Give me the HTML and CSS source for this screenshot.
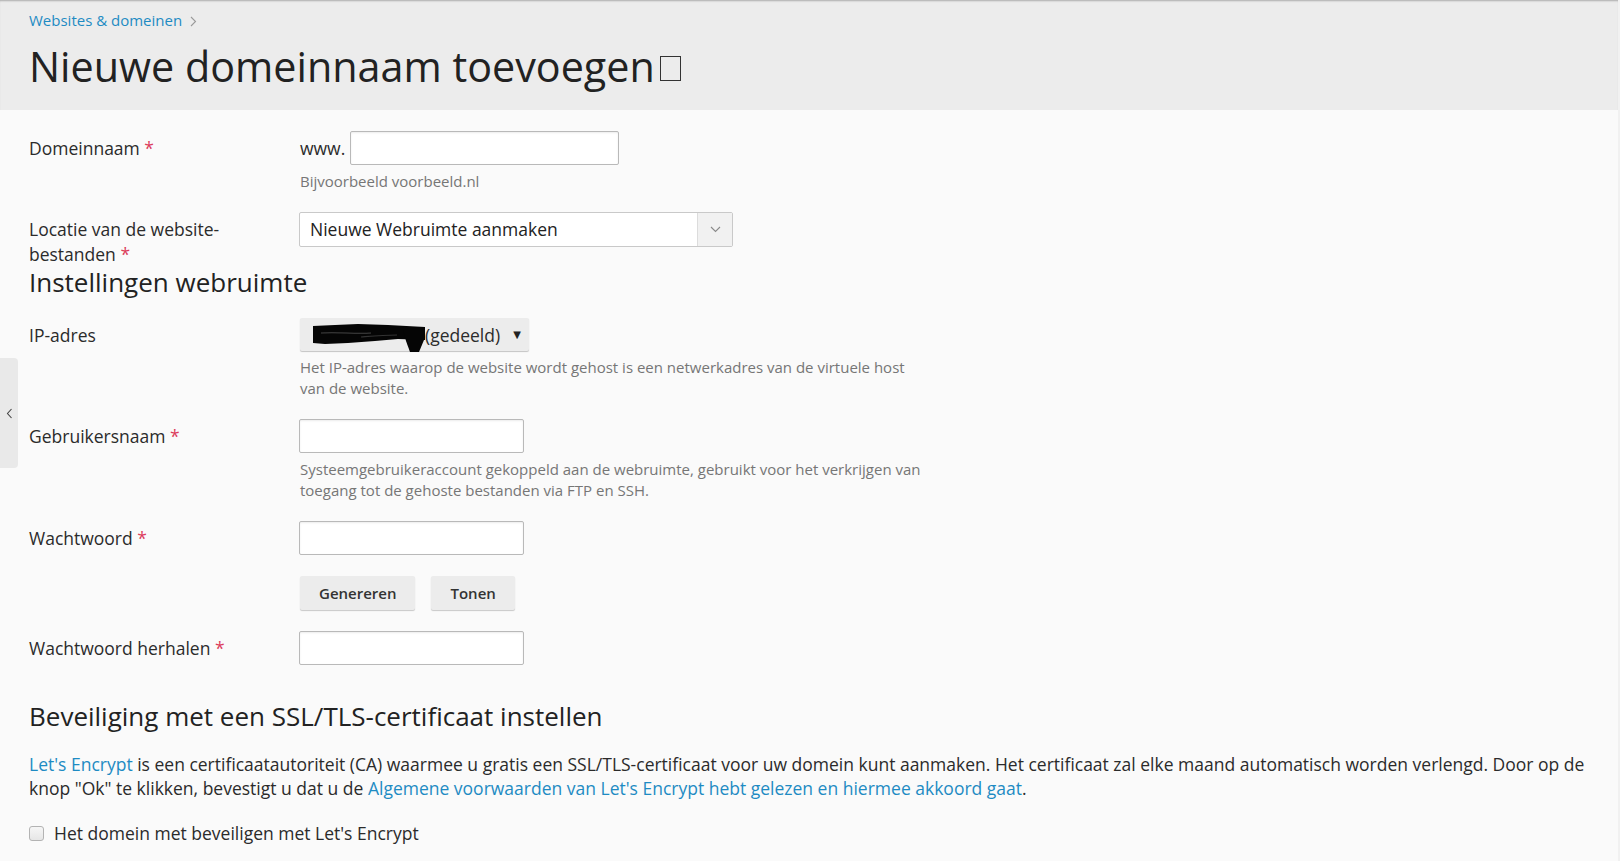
FILE: index.html
```html
<!DOCTYPE html>
<html lang="nl">
<head>
<meta charset="utf-8">
<title>Nieuwe domeinnaam toevoegen</title>
<link rel="stylesheet" href="styles.css">
</head>
<body>
<div class="app">
  <header class="page-header">
    <nav class="breadcrumbs">
      <a class="link" href="#">Websites &amp; domeinen</a>
      <svg class="crumb-sep" width="7" height="11" viewBox="0 0 7 11"><polyline points="1,1 5.5,5.5 1,10" fill="none" stroke="#9a9a9a" stroke-width="1.1"/></svg>
    </nav>
    <h1 class="page-title">Nieuwe domeinnaam toevoegen<span class="tofu"></span></h1>
  </header>

  <main class="content">
    <div class="form-row first">
      <label class="form-label">Domeinnaam <span class="req">*</span></label>
      <div class="form-field">
        <div class="prefixed"><span class="prefix">www.</span><input class="input input-domain" type="text"></div>
        <div class="hint">Bijvoorbeeld voorbeeld.nl</div>
      </div>
    </div>

    <div class="form-row">
      <label class="form-label">Locatie van de website-<br>bestanden <span class="req">*</span></label>
      <div class="form-field">
        <div class="combo">
          <span class="combo-value">Nieuwe Webruimte aanmaken</span>
          <span class="combo-arrow"><svg width="11" height="7" viewBox="0 0 11 7"><polyline points="1,1 5.5,5.5 10,1" fill="none" stroke="#8a8a8a" stroke-width="1.1"/></svg></span>
        </div>
      </div>
    </div>

    <h2 class="section-title">Instellingen webruimte</h2>

    <div class="form-row">
      <label class="form-label">IP-adres</label>
      <div class="form-field">
        <div class="ip-select">
          <svg class="redact" width="113" height="28" viewBox="0 0 113 28">
            <path d="M0 2 L 22 1 L 45 0 L 75 1 L 112 3 L 112 16 L 85 15 L 62 17 L 35 19 L 12 20 L 0 19 Z" fill="#050505"/>
            <path d="M90 6 L 112 6 L 111 16 L 106 28 L 97 28 L 93 17 Z" fill="#050505"/>
            <path d="M8 9 C 25 8, 42 10, 58 9" stroke="#444" stroke-width="1.2" fill="none"/>
            <path d="M48 13 C 60 12, 70 11, 84 11" stroke="#333" stroke-width="1.2" fill="none"/>
          </svg><span class="ip-text">(gedeeld)</span>
          <span class="ip-arrow">▼</span>
        </div>
        <div class="hint hint-block">Het IP-adres waarop de website wordt gehost is een netwerkadres van de virtuele host<br>van de website.</div>
      </div>
    </div>

    <div class="form-row">
      <label class="form-label">Gebruikersnaam <span class="req">*</span></label>
      <div class="form-field">
        <input class="input input-short" type="text">
        <div class="hint hint-block">Systeemgebruikeraccount gekoppeld aan de webruimte, gebruikt voor het verkrijgen van<br>toegang tot de gehoste bestanden via FTP en SSH.</div>
      </div>
    </div>

    <div class="form-row">
      <label class="form-label">Wachtwoord <span class="req">*</span></label>
      <div class="form-field">
        <input class="input input-short" type="password">
        <div class="btn-group">
          <button class="btn" type="button">Genereren</button>
          <button class="btn" type="button">Tonen</button>
        </div>
      </div>
    </div>

    <div class="form-row row-repeat">
      <label class="form-label">Wachtwoord herhalen <span class="req">*</span></label>
      <div class="form-field">
        <input class="input input-short" type="password">
      </div>
    </div>

    <h2 class="section-title ssl-title">Beveiliging met een SSL/TLS-certificaat instellen</h2>

    <p class="ssl-text"><a class="link" href="#">Let's Encrypt</a> is een certificaatautoriteit (CA) waarmee u gratis een SSL/TLS-certificaat voor uw domein kunt aanmaken. Het certificaat zal elke maand automatisch worden verlengd. Door op de knop "Ok" te klikken, bevestigt u dat u de <a class="link" href="#">Algemene voorwaarden van Let's Encrypt hebt gelezen en hiermee akkoord gaat</a>.</p>

    <label class="check-row"><input class="checkbox" type="checkbox"><span>Het domein met beveiligen met Let's Encrypt</span></label>
  </main>

  <button class="side-toggle" type="button" aria-label="Zijbalk">
    <svg width="7" height="11" viewBox="0 0 7 11"><polyline points="5.5,1 1.5,5.5 5.5,10" fill="none" stroke="#444" stroke-width="1.1"/></svg>
  </button>
</div>
</body>
</html>
```
FILE: styles.css
```css
html, body {
  margin: 0;
  padding: 0;
}
body {
  background: #fafafa;
  font-family: "Open Sans", "Liberation Sans", sans-serif;
  font-size: 17.5px;
  line-height: 1.42;
  color: #2b2b2b;
}
.app {
  position: relative;
  min-height: 861px;
  border-right: 2px solid #f1f1f1;
  box-sizing: border-box;
}
.link {
  color: #1e8bc3;
  text-decoration: none;
}

/* header */
.page-header {
  box-sizing: border-box;
  height: 110px;
  background: #ececec;
  padding: 10px 29px 0;
  box-shadow: inset 0 2px 2px -1px rgba(0, 0, 0, 0.28);
}
.breadcrumbs {
  display: flex;
  align-items: center;
  gap: 8px;
  font-size: 15px;
  line-height: 21.4px;
  height: 21.4px;
}
.crumb-sep {
  margin-top: 1px;
}
.page-title {
  margin: 10.6px 0 0;
  font-size: 41.3px;
  line-height: 49.5px;
  font-weight: 400;
  color: #222;
  display: flex;
  align-items: center;
}
.tofu {
  display: inline-block;
  width: 19px;
  height: 23px;
  border: 1.5px solid #333;
  margin-left: 5px;
  margin-top: 3px;
}

/* content */
.content {
  padding: 0 29px 20px;
}
.form-row {
  display: grid;
  grid-template-columns: 270px 1fr;
  margin-top: 20px;
}
.form-row.first {
  margin-top: 21px;
}
.form-label {
  padding-top: 5px;
  line-height: 24.85px;
}
.req {
  color: #dc3d5c;
}
.prefixed {
  display: flex;
  align-items: center;
  gap: 5px;
  margin-left: 1px;
}
.prefix {
  line-height: 24px;
}
.input {
  box-sizing: border-box;
  height: 34px;
  background: #fff;
  border: 1px solid #b9b9b9;
  border-radius: 2px;
  box-shadow: inset 0 1px 2px rgba(0, 0, 0, 0.08);
  padding: 0 8px;
  font: inherit;
  margin: 0;
  display: block;
}
.input-domain {
  width: 269px;
}
.input-short {
  width: 225px;
}
.hint {
  margin-top: 6px;
  margin-left: 1px;
  font-size: 15px;
  line-height: 21.4px;
  color: #767676;
}
.hint-block {
  line-height: 21px;
}

/* combo */
.combo {
  box-sizing: border-box;
  width: 434px;
  height: 35px;
  display: flex;
  align-items: stretch;
  background: #fff;
  border: 1px solid #c9c9c9;
  border-radius: 2px;
}
.combo-value {
  flex: 1;
  padding-left: 10px;
  line-height: 33px;
  color: #222;
}
.combo-arrow {
  width: 34px;
  display: flex;
  align-items: center;
  justify-content: center;
  background: #f1f1f1;
  border-left: 1px solid #dcdcdc;
}

.section-title {
  margin: 0;
  font-size: 26px;
  line-height: 31.2px;
  font-weight: 400;
  color: #222;
}

/* ip select */
.ip-select {
  box-sizing: border-box;
  width: 229px;
  height: 33px;
  margin-left: 1px;
  display: flex;
  align-items: center;
  padding-left: 13px;
  background: #ececec;
  border-radius: 2px;
  box-shadow: 0 1px 1px rgba(0, 0, 0, 0.22);
  color: #2b2b2b;
}
.redact {
  flex: none;
  margin-top: 6px;
  margin-right: -1px;
}
.ip-text {
  line-height: 24px;
}
.ip-arrow {
  margin-left: auto;
  margin-right: 8px;
  font-size: 10px;
  color: #222;
  font-family: "DejaVu Sans", sans-serif;
}

/* buttons */
.btn-group {
  display: flex;
  gap: 16px;
  margin-top: 21px;
  margin-left: 1px;
}
.btn {
  height: 34px;
  padding: 0 19px;
  background: #ececec;
  border: none;
  border-radius: 2px;
  box-shadow: 0 1px 1px rgba(0, 0, 0, 0.2);
  font-family: "Open Sans", sans-serif;
  font-size: 15px;
  font-weight: 600;
  color: #333;
}
.row-repeat {
  margin-top: 21px;
}

.ssl-title {
  margin-top: 36px;
}
.ssl-text {
  margin: 19px 0 0;
  line-height: 24.85px;
}

.check-row {
  display: flex;
  align-items: center;
  margin-top: 20px;
  line-height: 24.85px;
}
.checkbox {
  appearance: none;
  -webkit-appearance: none;
  box-sizing: border-box;
  width: 15px;
  height: 15px;
  margin: 0 10px 0 0;
  border: 1px solid #b3b3b3;
  border-radius: 3px;
  background: linear-gradient(#f6f6f6, #e6e6e6);
}

/* side toggle */
.side-toggle {
  position: absolute;
  left: 0;
  top: 358px;
  width: 18px;
  height: 110px;
  padding: 0;
  border: none;
  background: #e9e9e9;
  border-radius: 0 4px 4px 0;
  display: flex;
  align-items: center;
  justify-content: center;
}
```
